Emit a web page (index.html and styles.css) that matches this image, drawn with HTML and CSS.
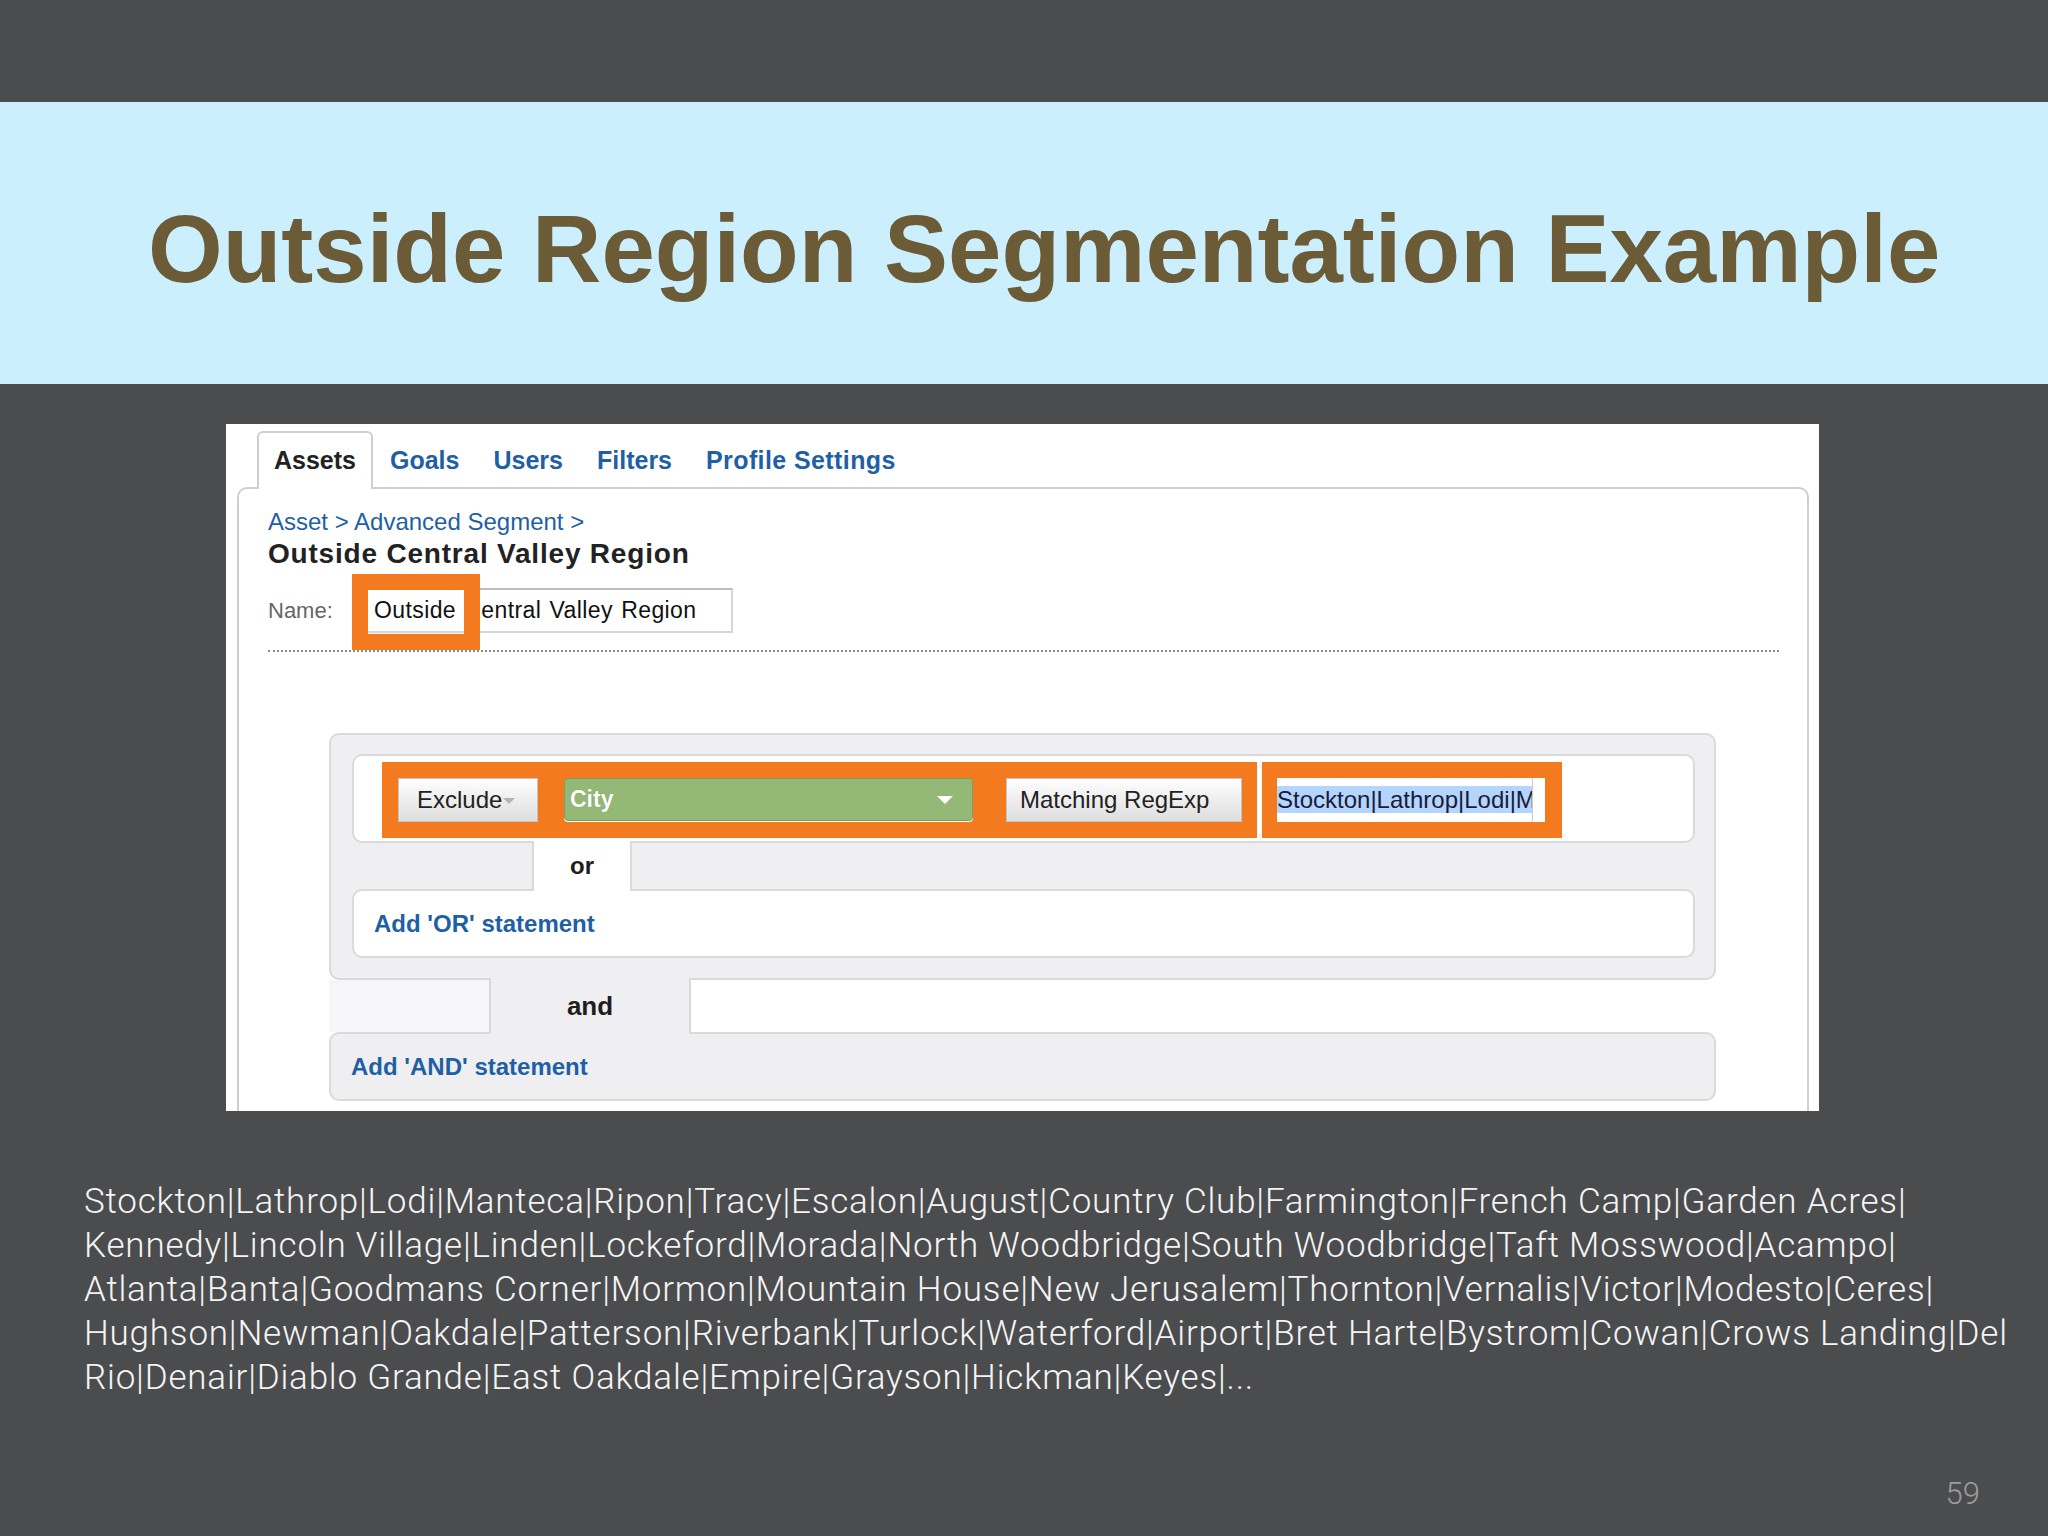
FILE: index.html
```html
<!DOCTYPE html>
<html lang="en">
<head>
<meta charset="utf-8">
<title>Outside Region Segmentation Example</title>
<link rel="stylesheet" href="styles.css">
</head>
<body>
<div class="slide">
  <header class="title-band">
    <h1>Outside Region Segmentation Example</h1>
  </header>

  <section class="shot">
    <nav class="tabs">
      <span class="tab active">Assets</span>
      <span class="tab">Goals</span>
      <span class="tab">Users</span>
      <span class="tab">Filters</span>
      <span class="tab">Profile Settings</span>
    </nav>
    <div class="content">
      <div class="crumbs"><span>Asset</span> &gt; <span>Advanced Segment</span> &gt;</div>
      <h2 class="seg-title">Outside Central Valley Region</h2>
      <div class="name-row">
        <span class="name-label">Name:</span>
        <div class="name-input">Outside Central Valley Region</div>
        <div class="callout name-callout"></div>
      </div>
      <div class="dotted"></div>

      <div class="group">
        <div class="cond-box">
          <div class="hl hl-main">
            <div class="btn btn-exclude">Exclude<i class="caret-gray"></i></div>
            <div class="select-city"><span>City</span><i class="caret-white"></i></div>
            <div class="btn btn-match">Matching RegExp</div>
          </div>
          <div class="hl hl-value">
            <div class="value-field">
              <div class="value-clip"><span class="sel">Stockton|Lathrop|Lodi|Manteca|Ripon|Tracy</span></div>
            </div>
          </div>
        </div>
        <div class="join-row"><div class="join or">or</div></div>
        <div class="add-box white"><span class="add-link">Add 'OR' statement</span></div>
      </div>

      <div class="and-row">
        <div class="and-left"></div>
        <div class="join and">and</div>
        <div class="and-right"></div>
      </div>
      <div class="add-box gray"><span class="add-link">Add 'AND' statement</span></div>
    </div>
  </section>

  <p class="cities">
    <span class="line">Stockton|Lathrop|Lodi|Manteca|Ripon|Tracy|Escalon|August|Country Club|Farmington|French Camp|Garden Acres|</span>
    <span class="line">Kennedy|Lincoln Village|Linden|Lockeford|Morada|North Woodbridge|South Woodbridge|Taft Mosswood|Acampo|</span>
    <span class="line">Atlanta|Banta|Goodmans Corner|Mormon|Mountain House|New Jerusalem|Thornton|Vernalis|Victor|Modesto|Ceres|</span>
    <span class="line">Hughson|Newman|Oakdale|Patterson|Riverbank|Turlock|Waterford|Airport|Bret Harte|Bystrom|Cowan|Crows Landing|Del</span>
    <span class="line">Rio|Denair|Diablo Grande|East Oakdale|Empire|Grayson|Hickman|Keyes|...</span>
  </p>
  <div class="page-num">59</div>
</div>
</body>
</html>
```

FILE: styles.css
```css
html, body {
  margin: 0;
  padding: 0;
}
body {
  background: #4b4c4e;
  font-family: "Liberation Sans", Arial, sans-serif;
}
.slide {
  width: 2048px;
  height: 1536px;
  padding-top: 102px;
  box-sizing: border-box;
  overflow: hidden;
}

/* Title band */
.title-band {
  height: 282px;
  box-sizing: border-box;
  background: #cbeffd;
  padding: 99px 0 0 148px;
}
.title-band h1 {
  margin: 0;
  font: bold 96px/96px "Liberation Sans", Arial, sans-serif;
  color: #6b5b37;
  white-space: nowrap;
}

/* Screenshot panel */
.shot {
  margin: 40px 0 0 226px;
  width: 1593px;
  height: 687px;
  box-sizing: border-box;
  padding-top: 7px;
  background: #fff;
  overflow: hidden;
}
.tabs {
  display: flex;
  padding-left: 31px;
  position: relative;
  z-index: 1;
}
.tab {
  font: bold 25px/54px "Liberation Sans", Arial, sans-serif;
  color: #1f5fa6;
  padding: 0 15px 2px;
  border: 2px solid transparent;
  border-bottom: 0;
  margin-bottom: -2px;
  white-space: nowrap;
}
.tab:last-child {
  letter-spacing: 0.4px;
}
.tab.active {
  color: #222;
  background: #fff;
  border-color: #cfcfcf;
  border-radius: 6px 6px 0 0;
}
.content {
  margin-left: 11px;
  width: 1572px;
  height: 700px;
  box-sizing: border-box;
  border: 2px solid #cfcfcf;
  border-bottom: 0;
  border-radius: 10px 10px 0 0;
  padding: 0 28px 0 29px;
}
.crumbs {
  margin-top: 18px;
  font: 24px/30px "Liberation Sans", Arial, sans-serif;
  color: #1f5fa6;
}
.seg-title {
  margin: 0;
  font: bold 28px/33px "Liberation Sans", Arial, sans-serif;
  letter-spacing: 0.8px;
  color: #222;
}
.name-row {
  position: relative;
  display: flex;
  align-items: center;
  height: 45px;
  margin-top: 18px;
}
.name-label {
  width: 94px;
  font: 22px/45px "Liberation Sans", Arial, sans-serif;
  color: #666;
}
.name-input {
  width: 371px;
  height: 45px;
  box-sizing: border-box;
  border: 2px solid #d6d6d6;
  border-top-color: #bdbdbd;
  padding-left: 10px;
  font: 23px/41px "Liberation Sans", Arial, sans-serif;
  letter-spacing: 0.4px;
  word-spacing: 1.5px;
  color: #111;
  white-space: nowrap;
  overflow: hidden;
}
.callout {
  position: absolute;
  box-sizing: border-box;
  border: 16px solid #f47a20;
}
.name-callout {
  left: 84px;
  top: -14px;
  width: 128px;
  height: 76px;
}
.dotted {
  margin-top: 17px;
  border-top: 2px dotted #8a8a8a;
}

/* Segment builder */
.group {
  margin: 81px 63px 0 61px;
  background: #efeff1;
  border: 2px solid #dadadc;
  border-radius: 10px;
  padding: 19px 19px 20px 21px;
}
.cond-box {
  display: flex;
  background: #fff;
  border: 2px solid #dadadc;
  border-radius: 10px;
  padding: 6px 0 3px 28px;
}
.hl {
  display: flex;
  align-items: flex-start;
  height: 76px;
  box-sizing: border-box;
  padding: 16px 0;
  background: #f47a20;
}
.hl-main {
  width: 875px;
  padding-left: 16px;
}
.hl-value {
  width: 300px;
  margin-left: 5px;
  padding-left: 15px;
}
.btn {
  height: 44px;
  box-sizing: border-box;
  border: 1px solid #c4c4c4;
  background: linear-gradient(#fefefe, #dedede);
  font: 24px/42px "Liberation Sans", Arial, sans-serif;
  color: #222;
  white-space: nowrap;
}
.btn-exclude {
  width: 140px;
  padding-left: 18px;
  display: flex;
  align-items: center;
}
.caret-gray {
  width: 0;
  height: 0;
  margin-left: 1px;
  margin-top: 2px;
  border-left: 6px solid transparent;
  border-right: 6px solid transparent;
  border-top: 6px solid #b4b4b4;
}
.select-city {
  margin-left: 26px;
  width: 409px;
  height: 43px;
  box-sizing: border-box;
  display: flex;
  align-items: center;
  justify-content: space-between;
  padding: 0 19px 0 5px;
  background: #94b977;
  border: 1px solid #7d9e60;
  border-radius: 4px;
  box-shadow: 0 1px 0 #fff;
  font: bold 23px/41px "Liberation Sans", Arial, sans-serif;
  color: #fff;
  text-shadow: 0 0 1px rgba(60, 90, 40, 0.5);
}
.caret-white {
  width: 0;
  height: 0;
  border-left: 8px solid transparent;
  border-right: 8px solid transparent;
  border-top: 8px solid #fff;
}
.btn-match {
  margin-left: 33px;
  width: 236px;
  padding-left: 13px;
}
.value-field {
  width: 268px;
  height: 44px;
  background: #fff;
}
.value-clip {
  width: 256px;
  height: 44px;
  box-sizing: border-box;
  border-right: 1px solid #cccccc;
  overflow: hidden;
  white-space: nowrap;
  font: 24px/44px "Liberation Sans", Arial, sans-serif;
  color: #1b1b3a;
}
.sel {
  background: #b4d5fe;
}
.join-row {
  display: flex;
  height: 46px;
  padding-left: 180px;
}
.join {
  position: relative;
  box-sizing: border-box;
  border-left: 2px solid #dadadc;
  border-right: 2px solid #dadadc;
  text-align: center;
  font-weight: bold;
  color: #1e1e1e;
}
.join.or {
  width: 100px;
  height: 50px;
  margin: -2px 0;
  background: #fff;
  font-size: 24px;
  line-height: 50px;
}
.add-box {
  border: 2px solid #dadadc;
  border-radius: 10px;
  padding-left: 20px;
  font: bold 24px/65px "Liberation Sans", Arial, sans-serif;
}
.add-link {
  color: #1f5fa6;
}
.add-box.white {
  background: #fff;
}
.and-row {
  display: flex;
  height: 52px;
  margin: 0 63px 0 61px;
}
.and-left {
  width: 160px;
  background: #f6f6f8;
}
.join.and {
  width: 202px;
  height: 56px;
  margin: -2px 0;
  background: #efeff1;
  font-size: 26px;
  line-height: 56px;
}
.and-right {
  flex: 1;
  background: #fff;
}
.add-box.gray {
  margin: 0 63px 0 61px;
  background: #efeff1;
}

/* City list */
.cities {
  margin: 69px 0 0 84px;
  font: 300 35px/44px Roboto, "Liberation Sans", sans-serif;
  letter-spacing: 0.8px;
  color: #f4f4f4;
}
.cities .line {
  display: block;
  white-space: nowrap;
}
.page-num {
  margin: 76px 68px 0 0;
  text-align: right;
  font: 300 31px/36px Roboto, "Liberation Sans", sans-serif;
  color: #9c9c9c;
}
```
